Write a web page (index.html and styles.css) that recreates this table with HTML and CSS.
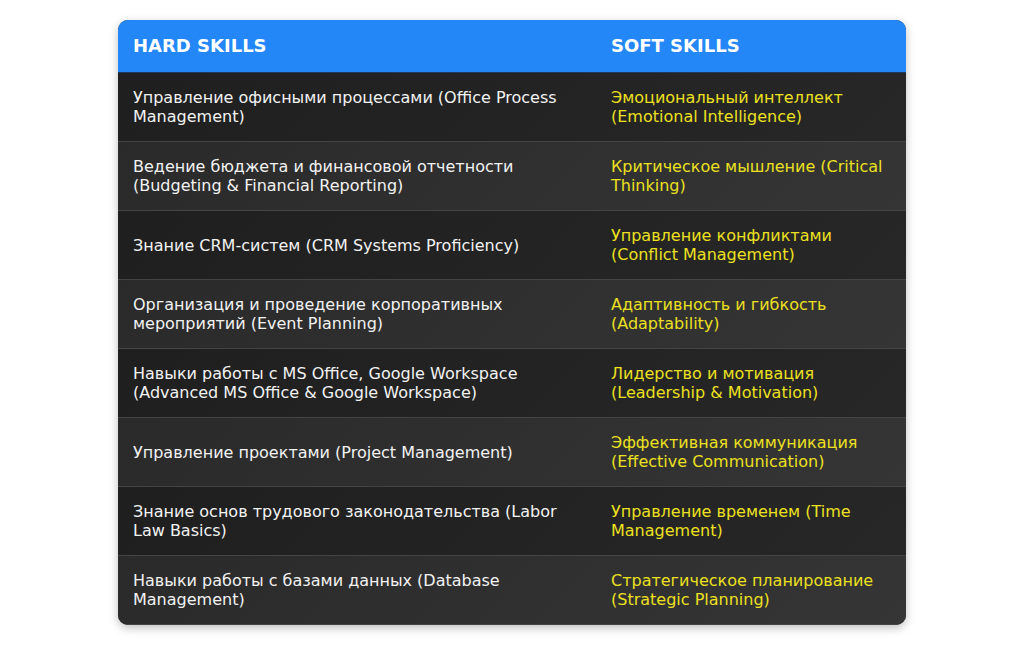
FILE: index.html
```html
<!DOCTYPE html>
<html lang="ru">
<head>
<meta charset="utf-8">
<title>Skills</title>
<link rel="stylesheet" href="styles.css">
</head>
<body>
<div class="card">
  <div class="row head">
    <div class="cell">HARD SKILLS</div>
    <div class="cell">SOFT SKILLS</div>
  </div>
  <div class="row odd">
    <div class="cell">Управление офисными процессами (Office Process Management)</div>
    <div class="cell soft">Эмоциональный интеллект (Emotional Intelligence)</div>
  </div>
  <div class="row even">
    <div class="cell">Ведение бюджета и финансовой отчетности (Budgeting &amp; Financial Reporting)</div>
    <div class="cell soft">Критическое мышление (Critical Thinking)</div>
  </div>
  <div class="row odd">
    <div class="cell">Знание CRM-систем (CRM Systems Proficiency)</div>
    <div class="cell soft">Управление конфликтами (Conflict Management)</div>
  </div>
  <div class="row even">
    <div class="cell">Организация и проведение корпоративных мероприятий (Event Planning)</div>
    <div class="cell soft">Адаптивность и гибкость (Adaptability)</div>
  </div>
  <div class="row odd">
    <div class="cell">Навыки работы с MS Office, Google Workspace (Advanced MS Office &amp; Google Workspace)</div>
    <div class="cell soft">Лидерство и мотивация (Leadership &amp; Motivation)</div>
  </div>
  <div class="row even">
    <div class="cell">Управление проектами (Project Management)</div>
    <div class="cell soft">Эффективная коммуникация (Effective Communication)</div>
  </div>
  <div class="row odd">
    <div class="cell">Знание основ трудового законодательства (Labor Law Basics)</div>
    <div class="cell soft">Управление временем (Time Management)</div>
  </div>
  <div class="row even">
    <div class="cell">Навыки работы с базами данных (Database Management)</div>
    <div class="cell soft">Стратегическое планирование (Strategic Planning)</div>
  </div>
</div>
</body>
</html>
```

FILE: styles.css
```css
html, body {
  margin: 0;
  padding: 0;
  background: #ffffff;
}
body {
  padding: 20px 0;
  font-family: "DejaVu Sans", sans-serif;
}
.card {
  width: 788px;
  margin: 0 auto;
  border-radius: 10px;
  overflow: hidden;
  box-shadow: 0 3px 10px rgba(0, 0, 0, 0.25);
  background: #262626;
}
.row {
  display: grid;
  grid-template-columns: 478px 310px;
  border-bottom: 1px solid #444444;
}
.cell {
  padding: 15px;
  font-size: 16px;
  line-height: 19px;
  color: #f2f2f2;
  display: flex;
  align-items: center;
}
.head {
  background: #2387f7;
  border-bottom: 1px solid #1e3a5c;
}
.head .cell {
  font-size: 18px;
  font-weight: bold;
  line-height: 22px;
  color: #ffffff;
}
.odd {
  background: linear-gradient(135deg, #1f1f1f, #272727);
}
.even {
  background: linear-gradient(135deg, #2a2a2a, #353535);
}
.soft {
  color: #ece020;
}
```
